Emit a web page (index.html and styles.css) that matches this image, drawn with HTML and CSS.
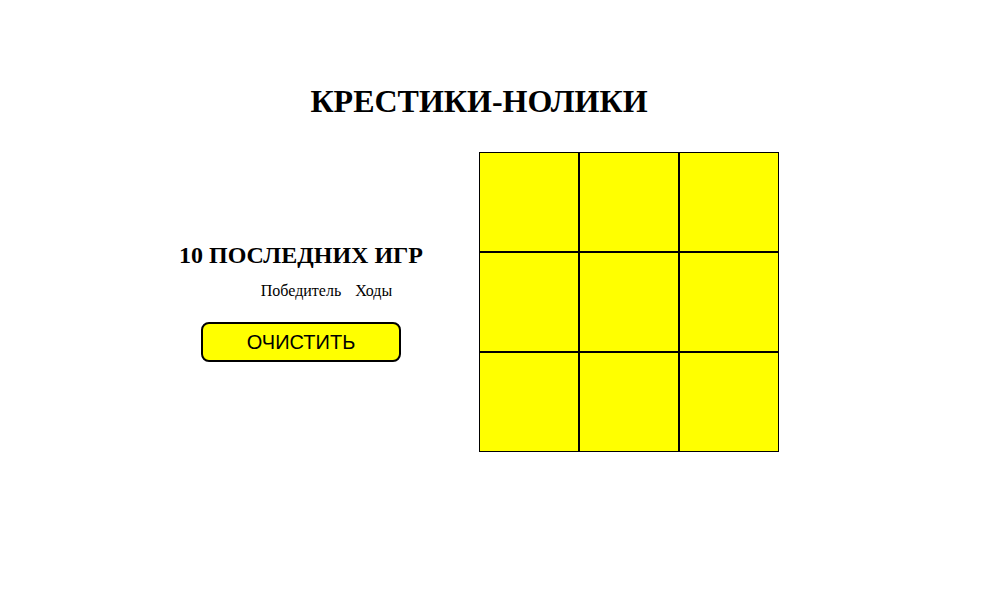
FILE: index.html
```html
<!DOCTYPE html>
<html lang="ru">
<head>
<meta charset="utf-8">
<title>Крестики-нолики</title>
<link rel="stylesheet" href="styles.css">
</head>
<body>
<div class="page">
  <h1 class="title">КРЕСТИКИ-НОЛИКИ</h1>
  <div class="game">
    <div class="history">
      <h2 class="history-title">10 ПОСЛЕДНИХ ИГР</h2>
      <table class="history-table">
        <tr>
          <th class="col-num"></th>
          <th>Победитель</th>
          <th>Ходы</th>
        </tr>
      </table>
      <button class="clear-btn">ОЧИСТИТЬ</button>
    </div>
    <div class="board">
      <div class="cell"></div>
      <div class="cell"></div>
      <div class="cell"></div>
      <div class="cell"></div>
      <div class="cell"></div>
      <div class="cell"></div>
      <div class="cell"></div>
      <div class="cell"></div>
      <div class="cell"></div>
    </div>
  </div>
</div>
</body>
</html>
```

FILE: styles.css
```css
html, body {
  margin: 0;
  padding: 0;
  background: #ffffff;
}

body {
  font-family: "Liberation Serif", "Times New Roman", serif;
  color: #000;
}

.page {
  padding-top: 83px;
}

.title {
  width: 958px;
  margin: 0;
  text-align: center;
  font-size: 32px;
  font-weight: bold;
}

.game {
  display: flex;
  align-items: center;
  margin-top: 32px;
  margin-left: 201px;
  gap: 78px;
}

.history {
  width: 200px;
  display: flex;
  flex-direction: column;
  align-items: center;
}

.history-title {
  margin: 0;
  white-space: nowrap;
  font-size: 24px;
  font-weight: bold;
  text-align: center;
}

.history-table {
  margin-top: 13px;
  border-collapse: collapse;
}

.history-table th {
  font-weight: normal;
  font-size: 16px;
  padding: 0 7px;
}

.history-table .col-num {
  width: 51px;
  padding: 0;
}

.clear-btn {
  margin-top: 22px;
  width: 200px;
  height: 40px;
  border: 2px solid #000;
  border-radius: 8px;
  background: #ffff00;
  font-family: "Liberation Sans", Arial, sans-serif;
  font-size: 20px;
  color: #000;
  padding: 0;
}

.board {
  display: grid;
  grid-template-columns: repeat(3, 100px);
  grid-template-rows: repeat(3, 100px);
}

.cell {
  box-sizing: border-box;
  border: 1px solid #000;
  background: #ffff00;
}
```
